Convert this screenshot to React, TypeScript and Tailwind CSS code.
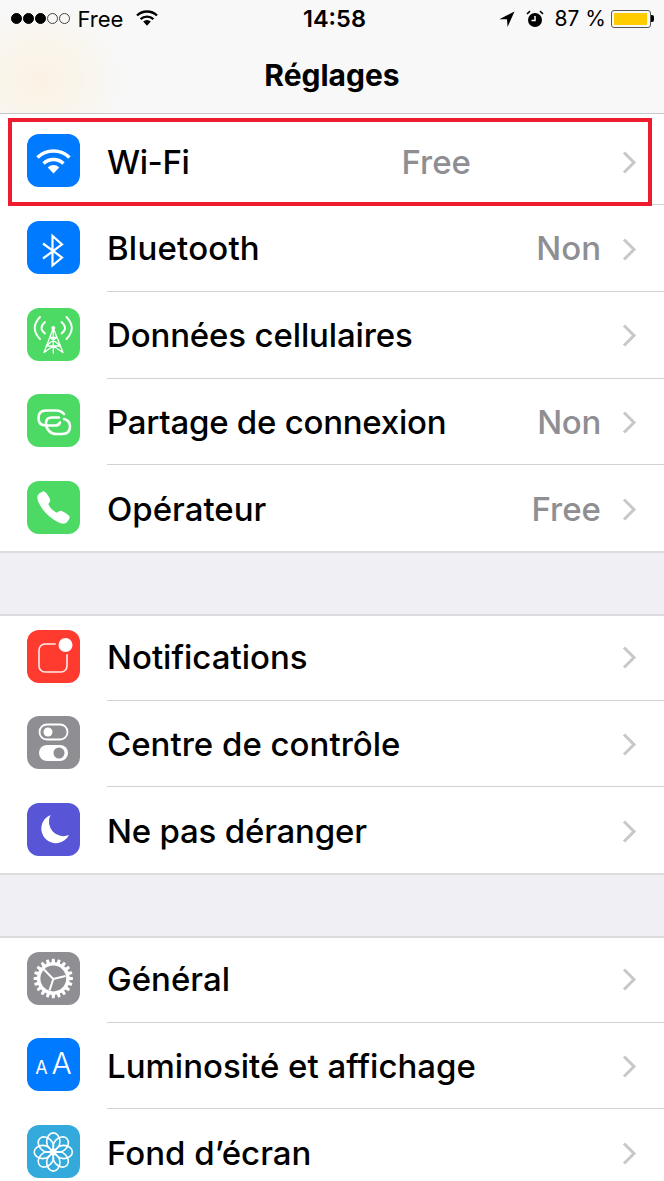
import React from "react";
import { IoCall } from "react-icons/io5";

const S = "w-[53px] h-[53px]";

const WifiBig = () => (
  <svg viewBox="0 0 53 53" className={S} fill="none" stroke="white" strokeWidth="3.4">
    <path d="M10.5 23.5A23 23 0 0 1 42.5 23.5" />
    <path d="M16.5 29.5A14.5 14.5 0 0 1 36.5 29.5" />
    <path d="M20.8 33.4A8 8 0 0 1 32.2 33.4L26.5 39.6Z" fill="white" stroke="none" />
  </svg>
);

const WifiSmall = () => (
  <svg viewBox="0 0 22 17" className="ml-[13px] w-[22px] h-[17px] -mt-[3px]" fill="none" stroke="black" strokeWidth="2.4">
    <path d="M1 6.5A14.5 14.5 0 0 1 21 6.5" />
    <path d="M4.6 10.2A9.3 9.3 0 0 1 17.4 10.2" />
    <path d="M7.2 12.6A5.3 5.3 0 0 1 14.8 12.6L11 16.8Z" fill="black" stroke="none" />
  </svg>
);

const Bluetooth = () => (
  <svg viewBox="0 0 53 53" className={S} fill="none" stroke="white" strokeWidth="2.2" strokeLinejoin="miter">
    <path d="M16 22.5L35 36.5L25.5 44.5V15L35 23.5L16 37.5" />
  </svg>
);

const Tower = () => (
  <svg viewBox="0 0 53 53" className={S} fill="none" stroke="white" strokeWidth="1.3" strokeLinecap="round">
    <circle cx="26.3" cy="20" r="2" fill="white" stroke="none" />
    <path d="M26.3 20V45M25.6 22L17 44.5M27 22L36 44.5M23 29.5H29.6M23 29.5L33.5 38M29.6 29.5L19 38M19.5 38H33M17 44.5L26.3 38M36 44.5L26.3 38" />
    <path d="M13 9Q2.5 20 13 31M18 14Q11 20 18 25.5M39.5 9Q50 20 39.5 31M34.5 14Q41.5 20 34.5 25.5" strokeWidth="1.9" />
  </svg>
);

const Chain = () => (
  <svg viewBox="0 0 53 53" className={S} fill="none" stroke="white" strokeWidth="2.6" strokeLinecap="round">
    <path d="M37 20Q34 16.5 29 16.5H19Q11.5 16.5 11.5 24Q11.5 31.5 19 31.5H28Q32 31.5 33 28.5" />
    <path d="M32 23.5H25Q19 23.5 19 29Q19 34 22 37Q25 40 29 40H35Q43 40 43 32.5Q43 26.5 37 25" />
  </svg>
);

const Notif = () => (
  <svg viewBox="0 0 53 53" className={S} fill="none">
    <rect x="12" y="14" width="28" height="28" rx="6" stroke="white" strokeWidth="1.6" opacity="0.9" />
    <circle cx="38" cy="15" r="9.5" fill="#ff3b30" />
    <circle cx="38.5" cy="15" r="7" fill="white" />
  </svg>
);

const Toggles = () => (
  <svg viewBox="0 0 53 53" className={S} fill="none">
    <rect x="12.5" y="8.5" width="28" height="15" rx="7.5" stroke="white" strokeWidth="1.8" />
    <circle cx="21" cy="16" r="4.5" fill="white" />
    <rect x="12" y="29" width="29" height="16" rx="8" fill="white" />
    <circle cx="32" cy="37" r="5.5" fill="#8e8e93" />
  </svg>
);

const Moon = () => (
  <svg viewBox="0 0 53 53" className={S}>
    <path d="M23.5 12A14.6 14.6 0 1 0 42 32A14.5 14.5 0 0 1 23.5 12Z" fill="white" />
  </svg>
);

const Gear = () => {
  const teeth = Array.from({ length: 20 }, (_, i) => (i * 360) / 20);
  return (
    <svg viewBox="0 0 53 53" className={S} fill="none" stroke="white">
      {teeth.map((a) => (
        <path key={a} d="M24.4 11.5L25 6.8H27.6L28.2 11.5Z" fill="white" stroke="none" transform={`rotate(${a} 26.3 26.5)`} />
      ))}
      <circle cx="26.3" cy="26.5" r="14.6" strokeWidth="3.4" />
      <path d="M26.3 27L17 17.5M26.3 27L38.5 24M26.3 27L22.5 38.5" strokeWidth="2" />
    </svg>
  );
};

const Flower = () => {
  const p = Array.from({ length: 8 }, (_, i) => (i * 360) / 8);
  return (
    <svg viewBox="0 0 53 53" className={S} fill="none" stroke="white" strokeWidth="1.6">
      {p.map((a) => (
        <ellipse key={a} cx="26.3" cy="16.5" rx="6.6" ry="8.6" transform={`rotate(${a} 26.3 27)`} />
      ))}
      <circle cx="26.3" cy="27" r="3" fill="white" stroke="none" />
    </svg>
  );
};

const AA = () => (
  <div className="w-[53px] h-[53px] flex items-baseline justify-center text-white font-light gap-[4px] pt-[3px]">
    <span className="text-[18px] font-normal">A</span>
    <span className="text-[30px]">A</span>
  </div>
);

const Chevron = () => (
  <svg viewBox="0 0 15 23" className="w-[15px] h-[23px] ml-[21px] mr-[27px] shrink-0" fill="none" stroke="#c7c7cc" strokeWidth="3">
    <path d="M2 1.5L12 11.5L2 21.5" />
  </svg>
);

type RowP = { icon: React.ReactNode; bg: string; label: string; value?: string; last?: boolean; valueClass?: string; labelClass?: string };

const Row = ({ icon, bg, label, value, last, valueClass = "", labelClass = "" }: RowP) => (
  <div className="flex h-[86.67px] items-center">
    <div className={`ml-[27px] mb-[2px] w-[53px] h-[53px] rounded-[12px] flex items-center justify-center shrink-0 ${bg}`}>{icon}</div>
    <div className={`ml-[27px] flex-1 h-full flex items-center pt-[2px] ${last ? "" : "border-b border-[#d2d1d6]"}`}>
      <span className={`flex-1 text-[33px] text-black font-medium whitespace-nowrap ${labelClass}`}>{label}</span>
      {value && <span className={`text-[33px] font-medium text-[#8e8e93] ${valueClass}`}>{value}</span>}
      <Chevron />
    </div>
  </div>
);

export default function App() {
  return (
    <div className="relative w-[664px] h-[1181px] overflow-hidden bg-[#efeff4] font-['Inter',sans-serif]">
      <header className="h-[114px] border-b border-[#c8c7cc] bg-[#f8f8f8] bg-[radial-gradient(ellipse_85px_75px_at_40px_80px,#fbf2e4_0%,#faf5ec_50%,#f8f8f8_100%)]">
        <div className="h-[37px] grid grid-cols-3 items-center text-black">
          <div className="flex items-center pl-[11px]">
            <div className="flex gap-[1.5px]">
              {[1, 1, 1, 0, 0].map((f, i) => (
                <span key={i} className={`w-[10.5px] h-[10.5px] rounded-full border ${f ? "bg-black border-black" : "bg-transparent border-[#444]"}`} />
              ))}
            </div>
            <span className="ml-[8px] text-[22px] font-normal leading-none">Free</span>
            <WifiSmall />
          </div>
          <div className="text-center text-[23.5px] font-semibold leading-none pl-[5px]">14:58</div>
          <div className="flex items-center justify-end pr-[10px]">
            <svg viewBox="0 0 16 16" className="w-[16px] h-[16px]">
              <path d="M15.5 0.5L0.3 8.2L8 8.3L8.6 16Z" fill="black" />
            </svg>
            <svg viewBox="0 0 18 18" className="ml-[11px] w-[18px] h-[18px]">
              <circle cx="9" cy="10" r="7" fill="black" />
              <path d="M1 4L4 1.2M17 4L14 1.2" stroke="black" strokeWidth="1.6" />
              <path d="M9 6V10.5H5.5" stroke="white" strokeWidth="1.5" fill="none" />
            </svg>
            <span className="ml-[11px] text-[21px] font-normal leading-none whitespace-nowrap">87 %</span>
            <div className="ml-[5px] flex items-center">
              <div className="w-[40px] h-[18px] rounded-[3px] border border-[#555] p-[2px]">
                <div className="w-[33px] h-full bg-[#ffcc00]" />
              </div>
              <div className="w-[3px] h-[7px] bg-black rounded-r-[2px]" />
            </div>
          </div>
        </div>
        <h1 className="mt-[16px] text-center text-[30px] font-bold leading-[44px] text-black">Réglages</h1>
      </header>

      <section className="pt-[4.67px] pb-[1px] bg-white shadow-[inset_0_-2px_0_#dcdcdf]">
        <Row icon={<WifiBig />} bg="bg-[#007aff]" label="Wi-Fi" value="Free" valueClass="mr-[130px]" labelClass="tracking-[-0.4px]" />
        <Row icon={<Bluetooth />} bg="bg-[#007aff]" label="Bluetooth" value="Non" labelClass="tracking-[0.2px]" />
        <Row icon={<Tower />} bg="bg-[#4cd964]" label="Données cellulaires" labelClass="tracking-[-0.15px]" />
        <Row icon={<Chain />} bg="bg-[#4cd964]" label="Partage de connexion" value="Non" labelClass="tracking-[-0.25px]" valueClass="tracking-[-0.3px]" />
        <Row icon={<IoCall className="w-[37px] h-[37px] text-white" />} bg="bg-[#4cd964]" label="Opérateur" value="Free" last />
      </section>

      <section className="mt-[61px] pb-[1px] bg-white shadow-[inset_0_2px_0_#dcdcdf,inset_0_-2px_0_#dcdcdf]">
        <Row icon={<Notif />} bg="bg-[#ff3b30]" label="Notifications" />
        <Row icon={<Toggles />} bg="bg-[#8e8e93]" label="Centre de contrôle" />
        <Row icon={<Moon />} bg="bg-[#5856d6]" label="Ne pas déranger" labelClass="tracking-[-0.2px]" last />
      </section>

      <section className="mt-[61px] bg-white shadow-[inset_0_2px_0_#dcdcdf]">
        <Row icon={<Gear />} bg="bg-[#8e8e93]" label="Général" />
        <Row icon={<AA />} bg="bg-[#007aff]" label="Luminosité et affichage" />
        <Row icon={<Flower />} bg="bg-[#34aadc]" label="Fond d’écran" last />
      </section>

      <div className="absolute left-[8px] top-[118px] w-[644px] h-[88px] border-[4.5px] border-[#ed1c2e]" />
    </div>
  );
}
